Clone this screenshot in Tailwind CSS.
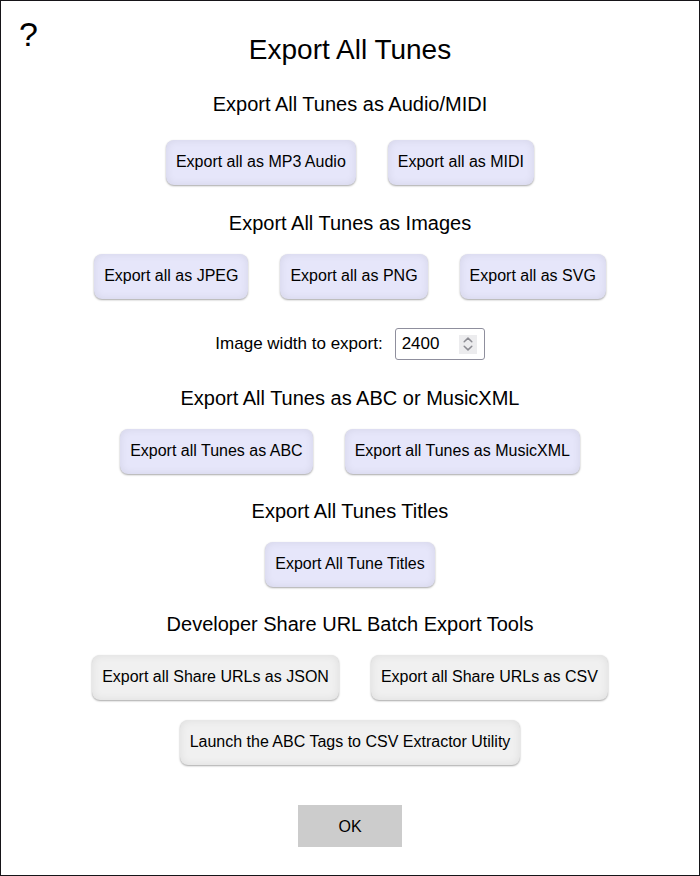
<!DOCTYPE html>
<html lang="en">
<head>
<meta charset="utf-8">
<meta name="viewport" content="width=device-width, initial-scale=1">
<title>Export All Tunes</title>
<script src="https://cdn.jsdelivr.net/npm/@tailwindcss/browser@4"></script>
</head>
<body class="bg-white text-black font-['Liberation_Sans',Arial,sans-serif]">
<main class="relative min-h-screen border border-[#161418] px-4 pt-[33px] pb-7 flex flex-col items-center">
  <a href="#help" aria-label="Help" class="absolute left-[18px] top-3 text-[34px] leading-[42px]">?</a>
  <h1 class="text-[28px] leading-8">Export All Tunes</h1>

  <section class="mt-[26px] flex flex-col items-center">
    <h2 class="text-xl leading-6 text-center">Export All Tunes as Audio/MIDI</h2>
    <div class="mt-6 flex flex-wrap justify-center gap-x-8 gap-y-5">
      <button type="button" class="rounded-lg bg-[#e6e6fa] px-2.5 pt-3 pb-[13px] text-base leading-5 shadow-[inset_0_0_8px_#00000014,0_1px_2px_#00000059]">Export all as MP3 Audio</button>
      <button type="button" class="rounded-lg bg-[#e6e6fa] px-2.5 pt-3 pb-[13px] text-base leading-5 shadow-[inset_0_0_8px_#00000014,0_1px_2px_#00000059]">Export all as MIDI</button>
    </div>
  </section>

  <section class="mt-[26px] flex flex-col items-center">
    <h2 class="text-xl leading-6 text-center">Export All Tunes as Images</h2>
    <div class="mt-[19px] flex flex-wrap justify-center gap-x-8 gap-y-5">
      <button type="button" class="rounded-lg bg-[#e6e6fa] px-2.5 pt-3 pb-[13px] text-base leading-5 shadow-[inset_0_0_8px_#00000014,0_1px_2px_#00000059]">Export all as JPEG</button>
      <button type="button" class="rounded-lg bg-[#e6e6fa] px-2.5 pt-3 pb-[13px] text-base leading-5 shadow-[inset_0_0_8px_#00000014,0_1px_2px_#00000059]">Export all as PNG</button>
      <button type="button" class="rounded-lg bg-[#e6e6fa] px-2.5 pt-3 pb-[13px] text-base leading-5 shadow-[inset_0_0_8px_#00000014,0_1px_2px_#00000059]">Export all as SVG</button>
    </div>
    <div class="mt-[29px] flex items-center gap-3">
      <label for="width" class="text-[17px] leading-6">Image width to export:</label>
      <div class="flex h-8 w-[90px] items-center rounded-[3px] border border-[#8f8f9d] pl-1.5 pr-[7px]">
        <input id="width" type="number" value="2400" class="min-w-0 flex-1 text-[17px] leading-6 outline-none [appearance:textfield] [&::-webkit-inner-spin-button]:appearance-none">
        <span class="flex h-[19px] w-[18px] items-center justify-center bg-[#ececee]" aria-hidden="true">
          <svg class="h-[14px] w-[10px]" viewBox="0 0 10 14" fill="none" stroke="#8b8b92" stroke-width="1.5" stroke-linecap="round" stroke-linejoin="round"><path d="M1.2 4.7 5 1.1l3.8 3.6M1.2 9.3 5 12.9l3.8-3.6"/></svg>
        </span>
      </div>
    </div>
  </section>

  <section class="mt-[26px] flex flex-col items-center">
    <h2 class="text-xl leading-6 text-center">Export All Tunes as ABC or MusicXML</h2>
    <div class="mt-[19px] flex flex-wrap justify-center gap-x-8 gap-y-5">
      <button type="button" class="rounded-lg bg-[#e6e6fa] px-2.5 pt-3 pb-[13px] text-base leading-5 shadow-[inset_0_0_8px_#00000014,0_1px_2px_#00000059]">Export all Tunes as ABC</button>
      <button type="button" class="rounded-lg bg-[#e6e6fa] px-2.5 pt-3 pb-[13px] text-base leading-5 shadow-[inset_0_0_8px_#00000014,0_1px_2px_#00000059]">Export all Tunes as MusicXML</button>
    </div>
  </section>

  <section class="mt-[25px] flex flex-col items-center">
    <h2 class="text-xl leading-6 text-center">Export All Tunes Titles</h2>
    <div class="mt-[19px] flex flex-wrap justify-center gap-x-8 gap-y-5">
      <button type="button" class="rounded-lg bg-[#e6e6fa] px-2.5 pt-3 pb-[13px] text-base leading-5 shadow-[inset_0_0_8px_#00000014,0_1px_2px_#00000059]">Export All Tune Titles</button>
    </div>
  </section>

  <section class="mt-[25px] flex flex-col items-center">
    <h2 class="text-xl leading-6 text-center">Developer Share URL Batch Export Tools</h2>
    <div class="mt-[19px] flex flex-wrap justify-center gap-x-8 gap-y-5">
      <button type="button" class="rounded-lg bg-[#f0f0f0] px-2.5 pt-3 pb-[13px] text-base leading-5 shadow-[inset_0_0_8px_#00000014,0_1px_2px_#00000059]">Export all Share URLs as JSON</button>
      <button type="button" class="rounded-lg bg-[#f0f0f0] px-2.5 pt-3 pb-[13px] text-base leading-5 shadow-[inset_0_0_8px_#00000014,0_1px_2px_#00000059]">Export all Share URLs as CSV</button>
      <button type="button" class="rounded-lg bg-[#f0f0f0] px-2.5 pt-3 pb-[13px] text-base leading-5 shadow-[inset_0_0_8px_#00000014,0_1px_2px_#00000059]">Launch the ABC Tags to CSV Extractor Utility</button>
    </div>
  </section>

  <button type="button" class="mt-10 bg-[#cccccc] px-10 pt-2.5 pb-2 text-base leading-6">OK</button>
</main>
</body>
</html>
